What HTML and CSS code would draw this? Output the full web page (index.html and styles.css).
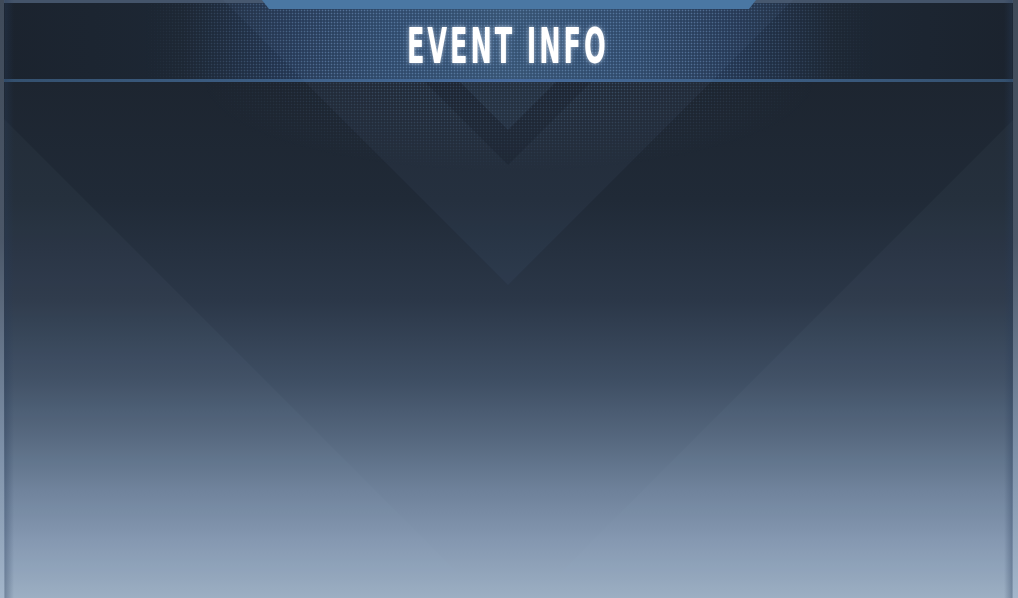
FILE: index.html
```html
<!DOCTYPE html>
<html>
<head>
<meta charset="utf-8">
<link rel="stylesheet" href="styles.css">
</head>
<body>
<div class="panel">
  <svg class="deco" viewBox="0 0 1018 598" preserveAspectRatio="none" aria-hidden="true">
    <polygon points="0,115 483,598 0,598" fill="#9fb6d0" fill-opacity="0.045"/>
    <polygon points="1018,115 535,598 1018,598" fill="#9fb6d0" fill-opacity="0.045"/>
    <polygon points="223,0 793,0 508,285" fill="#7fa0c8" fill-opacity="0.06"/>
    <polygon points="425,82 591,82 508,165" fill="#0e1620" fill-opacity="0.2"/>
    <polygon points="460,82 556,82 508,130" fill="#6f93bd" fill-opacity="0.1"/>
  </svg>
  <header class="head">
    <div class="tab"></div>
    <div class="band">
      <h1 class="title">EVENT INFO</h1>
    </div>
    <div class="rule"></div>
  </header>
  <main class="body">
    <div class="dots"></div>
  </main>
</div>
</body>
</html>
```

FILE: styles.css
```css
* { box-sizing: border-box; margin: 0; padding: 0; }
html, body { width: 1018px; height: 598px; overflow: hidden; background: #1c2430; }
body { font-family: "DejaVu Sans Condensed", "Liberation Sans", sans-serif; }

.panel {
  position: relative;
  width: 1018px;
  height: 598px;
  display: flex;
  flex-direction: column;
  background: linear-gradient(to bottom,
    #1c2430 0px, #1d2530 82px, #202a37 200px, #2b3748 300px,
    #3e4e63 380px, #56687f 440px, #6e819a 490px, #8497b0 540px, #9cafc3 598px);
  overflow: hidden;
}
.panel::before,
.panel::after {
  content: "";
  position: absolute;
  top: 0;
  bottom: 0;
  width: 14px;
  z-index: 3;
  pointer-events: none;
}
.panel::before {
  left: 0;
  background:
    linear-gradient(to right, rgba(0,0,0,0) 0, rgba(0,0,0,0) 4px, rgba(40,60,90,0.35) 5px, rgba(40,60,90,0) 14px),
    linear-gradient(to bottom, #3f4a59 0%, #4b5768 40%, #7d90a8 75%, #a3b6cb 100%);
  background-size: 100% 100%, 4px 100%;
  background-repeat: no-repeat;
}
.panel::after {
  right: 0;
  background:
    linear-gradient(to left, rgba(0,0,0,0) 0, rgba(0,0,0,0) 5px, rgba(40,60,90,0.35) 6px, rgba(40,60,90,0) 14px),
    linear-gradient(to bottom, #3f4a59 0%, #4b5768 40%, #7d90a8 75%, #a3b6cb 100%);
  background-size: 100% 100%, 5px 100%;
  background-position: 0 0, right 0 top 0;
  background-repeat: no-repeat;
}

.deco {
  position: absolute;
  left: 0;
  top: 0;
  width: 1018px;
  height: 598px;
  z-index: 2;
  pointer-events: none;
}

.head {
  position: relative;
  height: 82px;
  flex: 0 0 82px;
  display: flex;
  flex-direction: column;
  border-top: 3px solid #44546a;
}
.tab {
  position: absolute;
  left: 262px;
  top: -3px;
  width: 494px;
  height: 9px;
  background: #4a77a3;
  clip-path: polygon(0 0, 100% 0, calc(100% - 7px) 100%, 7px 100%);
  z-index: 4;
}
.band {
  position: relative;
  flex: 1;
  display: flex;
  align-items: center;
  justify-content: center;
  background: linear-gradient(to right,
    #1b232e 0%, #1d2734 18%, #233550 28%, #2c4666 38%, #33506f 50%,
    #2c4666 62%, #233550 72%, #1d2734 82%, #1b232e 100%);
}
.band::before {
  content: "";
  position: absolute;
  inset: 0;
  background-image: radial-gradient(circle, rgba(130,170,215,0.45) 0.7px, transparent 1.1px);
  background-size: 3px 3px;
  -webkit-mask-image: linear-gradient(to right, transparent 14%, #000 32%, #000 68%, transparent 86%);
  mask-image: linear-gradient(to right, transparent 14%, #000 32%, #000 68%, transparent 86%);
}
.title {
  position: relative;
  z-index: 5;
  color: #ffffff;
  font-weight: 700;
  font-size: 49px;
  line-height: 1;
  letter-spacing: 5px;
  transform: scaleX(0.58);
  margin-top: 11px;
  margin-left: -3px;
  text-shadow: 0 0 5px rgba(255,255,255,0.5), 0 0 12px rgba(180,210,255,0.3);
}
.rule {
  height: 3px;
  flex: 0 0 3px;
  background: linear-gradient(to right, #34506e 0%, #3d5f86 30%, #44699a 50%, #3d5f86 70%, #34506e 100%);
}

.body {
  position: relative;
  flex: 1;
}
.dots {
  position: absolute;
  left: 200px;
  right: 200px;
  top: 0;
  height: 90px;
  background-image: radial-gradient(circle, rgba(110,150,195,0.32) 0.7px, transparent 1.1px);
  background-size: 3px 3px;
  -webkit-mask-image: radial-gradient(ellipse 50% 100% at 50% 0%, #000 30%, transparent 100%);
  mask-image: radial-gradient(ellipse 50% 100% at 50% 0%, #000 30%, transparent 100%);
}
```
